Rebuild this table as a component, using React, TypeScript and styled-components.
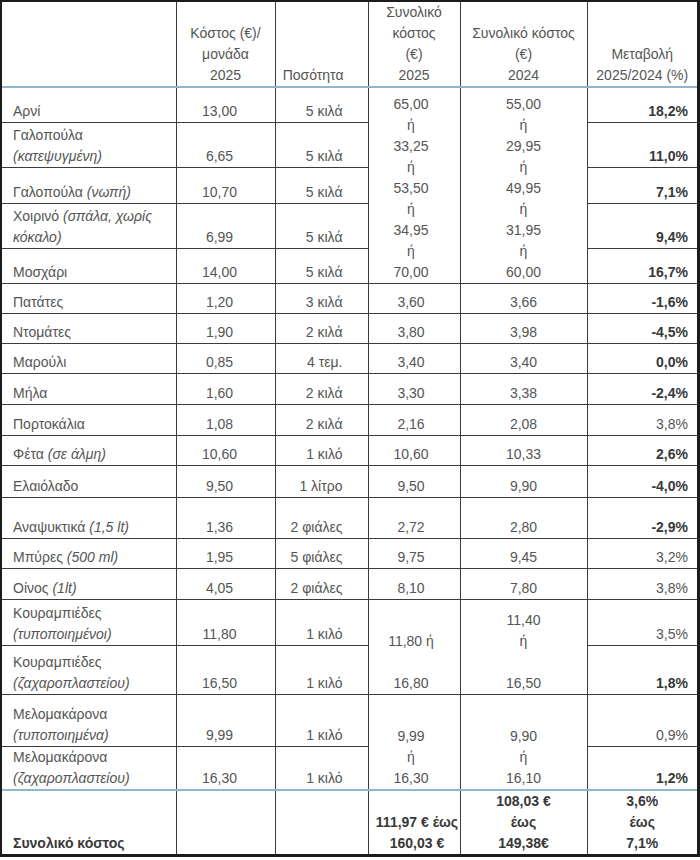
import React from 'react';
import styled, { createGlobalStyle } from 'styled-components';

const GlobalStyle = createGlobalStyle`
  body {
    margin: 0;
    background: #ffffff;
    font-family: "Liberation Sans", Arial, sans-serif;
  }
`;

const Frame = styled.div`
  width: 700px;
  box-sizing: border-box;
  border-style: solid;
  border-color: #1c1c1c;
  border-width: 2px 3px 3px 2px;
`;

const Table = styled.table`
  width: 100%;
  border-collapse: collapse;
  border-style: hidden;
  table-layout: fixed;
  font-size: 14px;
  line-height: 21px;
  color: #555555;
`;

const Row = styled.tr<{ $h: number }>`
  height: ${p => p.$h}px;
`;

type Align = 'left' | 'center' | 'right';

const BLUE = '#8fb8ce';
const LINE = '#3c3c3c';

const Cell = styled.td<{
  $align?: Align;
  $bold?: boolean;
  $pl?: number;
  $pr?: number;
}>`
  border: 1px solid ${LINE};
  vertical-align: bottom;
  padding: 0 ${p => p.$pr ?? 4}px 0 ${p => p.$pl ?? 4}px;
  text-align: ${p => p.$align ?? 'center'};
  font-weight: ${p => (p.$bold ? 700 : 400)};
  color: ${p => (p.$bold ? '#383838' : '#555555')};
  white-space: nowrap;
  overflow: visible;
`;

/* header cells: the wider blue rule wins the collapsed-border conflict */
const HeadCell = styled(Cell)`
  font-weight: 400;
  border-bottom: 2px solid ${BLUE};
`;

const TotalCell = styled(Cell)`
  border-top: 2px solid ${BLUE};
`;

const Note = styled.i`
  font-style: italic;
`;

type Item = {
  name: React.ReactNode;
  price: string;
  qty: string;
  pct: string;
  bold: boolean;
  h: number;
  merged?: { a: React.ReactNode; b: React.ReactNode; span: number };
};

const lines = (arr: string[]) =>
  arr.map((t, i) => (
    <React.Fragment key={i}>
      {i > 0 && <br />}
      {t === '' ? '\u00a0' : t}
    </React.Fragment>
  ));

const items: Item[] = [
  {
    name: 'Αρνί', price: '13,00', qty: '5 κιλά', pct: '18,2%', bold: true, h: 35,
    merged: {
      a: lines(['65,00', 'ή', '33,25', 'ή', '53,50', 'ή', '34,95', 'ή', '70,00']),
      b: lines(['55,00', 'ή', '29,95', 'ή', '49,95', 'ή', '31,95', 'ή', '60,00']),
      span: 5,
    },
  },
  { name: <>Γαλοπούλα<br /><Note>(κατεψυγμένη)</Note></>, price: '6,65', qty: '5 κιλά', pct: '11,0%', bold: true, h: 45 },
  { name: <>Γαλοπούλα <Note>(νωπή)</Note></>, price: '10,70', qty: '5 κιλά', pct: '7,1%', bold: true, h: 36 },
  { name: <>Χοιρινό <Note>(σπάλα, χωρίς</Note><br /><Note>κόκαλο)</Note></>, price: '6,99', qty: '5 κιλά', pct: '9,4%', bold: true, h: 45 },
  { name: 'Μοσχάρι', price: '14,00', qty: '5 κιλά', pct: '16,7%', bold: true, h: 35 },
  { name: 'Πατάτες', price: '1,20', qty: '3 κιλά', pct: '-1,6%', bold: true, h: 30, merged: { a: '3,60', b: '3,66', span: 1 } },
  { name: 'Ντομάτες', price: '1,90', qty: '2 κιλά', pct: '-4,5%', bold: true, h: 30, merged: { a: '3,80', b: '3,98', span: 1 } },
  { name: 'Μαρούλι', price: '0,85', qty: '4 τεμ.', pct: '0,0%', bold: true, h: 30, merged: { a: '3,40', b: '3,40', span: 1 } },
  { name: 'Μήλα', price: '1,60', qty: '2 κιλά', pct: '-2,4%', bold: true, h: 31, merged: { a: '3,30', b: '3,38', span: 1 } },
  { name: 'Πορτοκάλια', price: '1,08', qty: '2 κιλά', pct: '3,8%', bold: false, h: 31, merged: { a: '2,16', b: '2,08', span: 1 } },
  { name: <>Φέτα <Note>(σε άλμη)</Note></>, price: '10,60', qty: '1 κιλό', pct: '2,6%', bold: true, h: 30, merged: { a: '10,60', b: '10,33', span: 1 } },
  { name: 'Ελαιόλαδο', price: '9,50', qty: '1 λίτρο', pct: '-4,0%', bold: true, h: 32, merged: { a: '9,50', b: '9,90', span: 1 } },
  { name: <>Αναψυκτικά <Note>(1,5 lt)</Note></>, price: '1,36', qty: '2 φιάλες', pct: '-2,9%', bold: true, h: 41, merged: { a: '2,72', b: '2,80', span: 1 } },
  { name: <>Μπύρες <Note>(500 ml)</Note></>, price: '1,95', qty: '5 φιάλες', pct: '3,2%', bold: false, h: 30, merged: { a: '9,75', b: '9,45', span: 1 } },
  { name: <>Οίνος <Note>(1lt)</Note></>, price: '4,05', qty: '2 φιάλες', pct: '3,8%', bold: false, h: 31, merged: { a: '8,10', b: '7,80', span: 1 } },
  {
    name: <>Κουραμπιέδες<br /><Note>(τυποποιημένοι)</Note></>, price: '11,80', qty: '1 κιλό', pct: '3,5%', bold: false, h: 46,
    merged: { a: lines(['11,80 ή', '', '16,80']), b: lines(['11,40', 'ή', '', '16,50']), span: 2 },
  },
  { name: <>Κουραμπιέδες<br /><Note>(ζαχαροπλαστείου)</Note></>, price: '16,50', qty: '1 κιλό', pct: '1,8%', bold: true, h: 49 },
  {
    name: <>Μελομακάρονα<br /><Note>(τυποποιημένα)</Note></>, price: '9,99', qty: '1 κιλό', pct: '0,9%', bold: false, h: 52,
    merged: { a: lines(['9,99', 'ή', '16,30']), b: lines(['9,90', 'ή', '16,10']), span: 2 },
  },
  { name: <>Μελομακάρονα<br /><Note>(ζαχαροπλαστείου)</Note></>, price: '16,30', qty: '1 κιλό', pct: '1,2%', bold: true, h: 44 },
];

const App = () => (
  <>
    <GlobalStyle />
    <Frame>
      <Table>
        <colgroup>
          <col style={{ width: 174 }} />
          <col style={{ width: 99 }} />
          <col style={{ width: 93 }} />
          <col style={{ width: 92 }} />
          <col style={{ width: 127 }} />
          <col style={{ width: 110 }} />
        </colgroup>
        <tbody>
          <Row $h={85}>
            <HeadCell as="th" />
            <HeadCell as="th">{lines(['Κόστος (€)/', 'μονάδα', '2025'])}</HeadCell>
            <HeadCell as="th" $align="right" $pr={24}>Ποσότητα</HeadCell>
            <HeadCell as="th">{lines(['Συνολικό', 'κόστος', '(€)', '2025'])}</HeadCell>
            <HeadCell as="th">{lines(['Συνολικό κόστος', '(€)', '2024'])}</HeadCell>
            <HeadCell as="th">{lines(['Μεταβολή', '2025/2024 (%)'])}</HeadCell>
          </Row>
          {items.map((it, i) => (
            <Row key={i} $h={it.h}>
              <Cell $align="left" $pl={11}>{it.name}</Cell>
              <Cell $pr={16}>{it.price}</Cell>
              <Cell $align="right" $pr={25}>{it.qty}</Cell>
              {it.merged && (
                <>
                  <Cell rowSpan={it.merged.span} $pr={10}>{it.merged.a}</Cell>
                  <Cell rowSpan={it.merged.span}>{it.merged.b}</Cell>
                </>
              )}
              <Cell $align="right" $pr={9} $bold={it.bold}>{it.pct}</Cell>
            </Row>
          ))}
          <Row $h={64}>
            <TotalCell $align="left" $pl={11} $bold>Συνολικό κόστος</TotalCell>
            <TotalCell />
            <TotalCell />
            <TotalCell $bold $pl={6} $pr={0}>{lines(['111,97 € έως', '160,03 €'])}</TotalCell>
            <TotalCell $bold>{lines(['108,03 €', 'έως', '149,38€'])}</TotalCell>
            <TotalCell $bold>{lines(['3,6%', 'έως', '7,1%'])}</TotalCell>
          </Row>
        </tbody>
      </Table>
    </Frame>
  </>
);

export default App;
